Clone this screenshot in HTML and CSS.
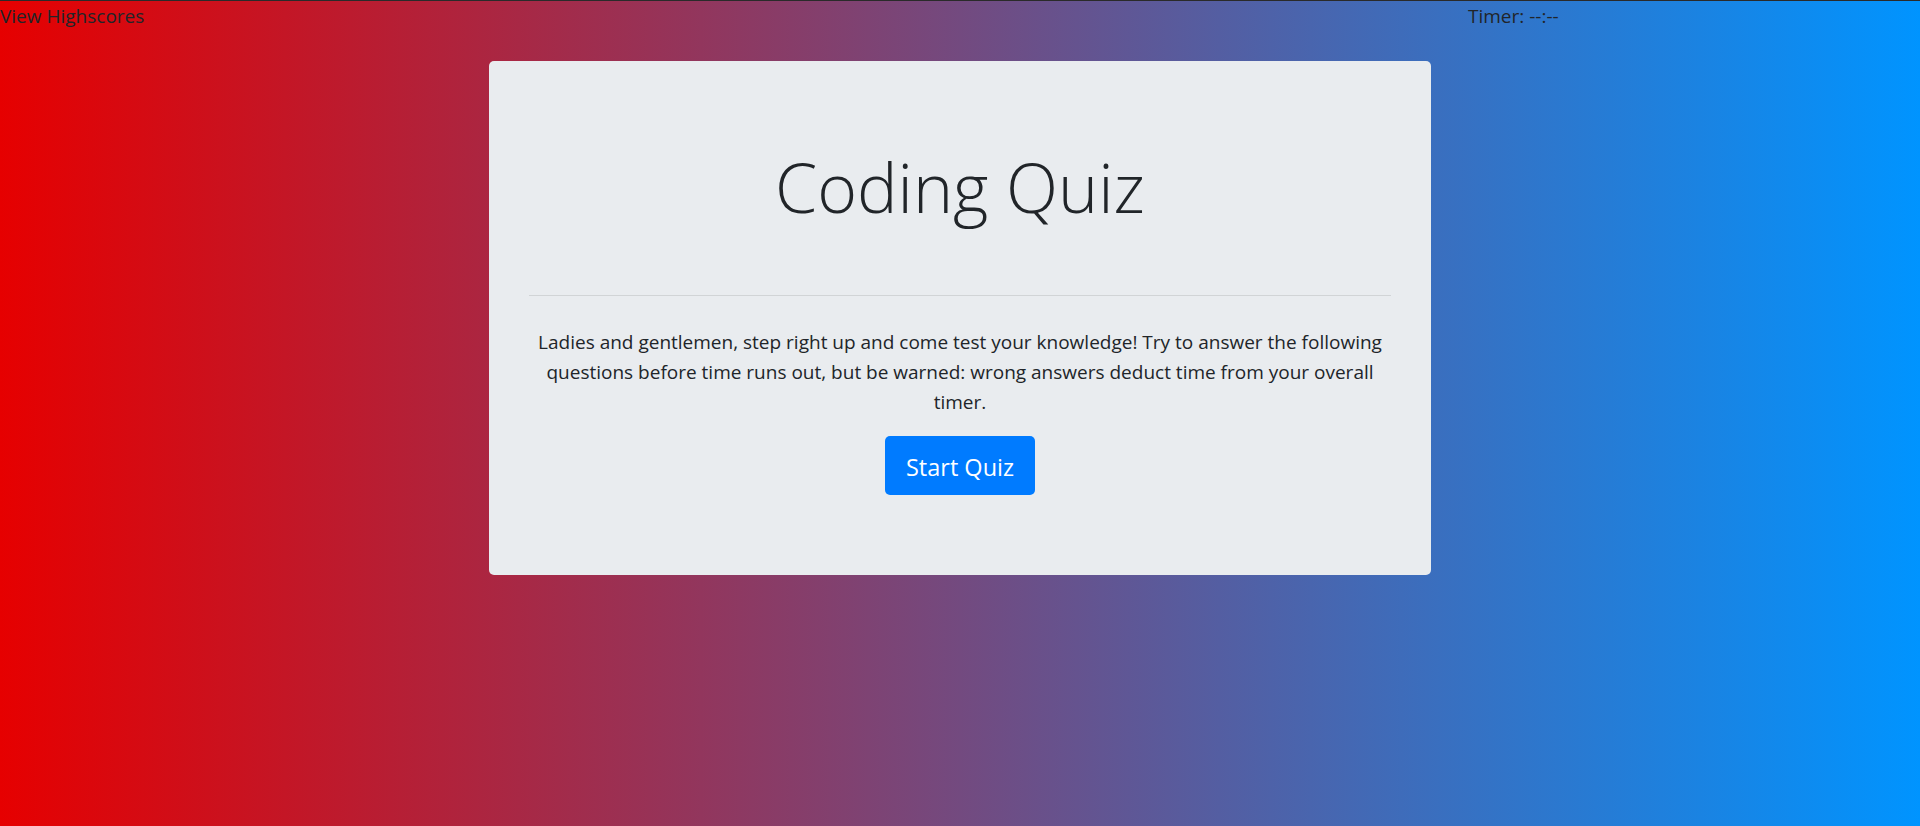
FILE: index.html
```html
<!DOCTYPE html>
<html lang="en">
<head>
<meta charset="utf-8">
<title>Coding Quiz</title>
<link rel="stylesheet" href="styles.css">
</head>
<body>
<header class="topbar">
  <a class="highscores" href="#">View Highscores</a>
  <div class="timer">Timer: --:--</div>
</header>
<main class="card">
  <h1 class="title">Coding Quiz</h1>
  <hr class="divider">
  <p class="intro">Ladies and gentlemen, step right up and come test your knowledge! Try to answer the following questions before time runs out, but be warned: wrong answers deduct time from your overall timer.</p>
  <button class="start" type="button">Start Quiz</button>
</main>
</body>
</html>
```
FILE: styles.css
```css
html, body {
  margin: 0;
  padding: 0;
}
body {
  min-height: 100vh;
  background: linear-gradient(to right, #e60000, #0094ff);
  font-family: "Open Sans", "Noto Sans", sans-serif;
  color: #212529;
  font-size: 19px;
  line-height: 30px;
}
.topbar {
  border-top: 1px solid #2a2a2a;
  display: grid;
  grid-template-columns: 1468px auto;
  height: 30px;
}
.highscores {
  color: #212529;
  text-decoration: none;
}
.card {
  width: 942px;
  box-sizing: border-box;
  margin: 30px auto 0;
  padding: 85px 40px 80px;
  background: #e9ecef;
  border-radius: 5px;
  text-align: center;
}
.title {
  margin: 0;
  font-size: 68px;
  font-weight: 300;
  line-height: 1.2;
}
.divider {
  margin: 67px 0 0;
  border: 0;
  border-top: 1px solid rgba(0, 0, 0, 0.1);
  height: 0;
}
.intro {
  margin: 31px auto 0;
  font-size: 19px;
  line-height: 30px;
}
.start {
  display: block;
  margin: 19px auto 0;
  width: 150px;
  height: 59px;
  box-sizing: border-box;
  padding: 3px 0 0;
  line-height: 56px;
  border: 0;
  border-radius: 5px;
  background: #007bff;
  color: #fff;
  font-family: inherit;
  font-size: 23.5px;
}
```
